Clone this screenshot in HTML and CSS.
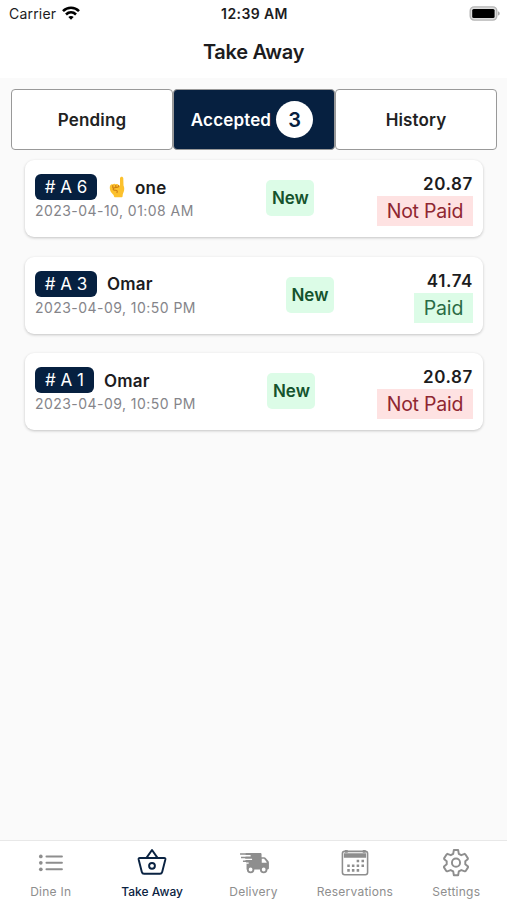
FILE: index.html
```
<!DOCTYPE html>
<html lang="en">
<head>
    <meta charset="UTF-8">
    <meta name="viewport" content="width=device-width, initial-scale=1.0">
    <title>Take Away</title>
    <link rel="stylesheet" href="styles.css">
</head>
<body>
    <header class="header">
        <div class="status-bar">
            <div class="carrier">
                <span>Carrier</span>
                <svg class="wifi" width="18" height="14" viewBox="0 0 18 14" fill="none" stroke="#000" stroke-width="2.6">
                    <path d="M1 5.1C5.500.6 12.500.6 17 5.100"/>
                    <path d="M4 8.500c2.900-2.800 7.100-2.800 10 0"/>
                    <path d="M9 13.800l-2.700-2.800c1.500-1.400 3.900-1.400 5.400 0z" fill="#000" stroke="none"/>
                </svg>
            </div>
            <span class="time">12:39 AM</span>
            <svg class="battery" width="31" height="15" viewBox="0 0 31 15">
                <rect x="1.200" y=".9" width="26.600" height="13.200" rx="4" fill="#ddd" stroke="#b5b5b5" stroke-width="1.400"/>
                <rect x="3.200" y="3" width="22.400" height="9" rx="1.500" fill="#000"/>
                <path d="M29 5.200c2.300.8 2.300 3.600 0 4.400z" fill="#aaa"/>
            </svg>
        </div>
        <h1>Take Away</h1>
    </header>

    <main>
        <div class="tabs">
            <button class="tab">Pending</button>
            <button class="tab active">Accepted <span class="count">3</span></button>
            <button class="tab">History</button>
        </div>

        <div class="orders">
            <div class="order">
                <div class="info">
                    <div class="customer">
                        <span class="number"># A 6</span>
                        <svg class="hand" width="18" height="22" viewBox="0 0 18 22">
                            <path d="M11 10V2.300c0-2.200 3.300-2.200 3.300 0l.2 7.200c1 2 .9 4.200.3 6.100-.4 1.600-1.200 2.400-1.200 4.600 0 .8-.6 1.100-1.300 1.100H6.300c-.8 0-1.200-.4-1.300-1.100-.2-1.700-3.300-3.200-3.900-6.100C.7 12 .6 10.100 1.500 9.100c.5-.8 1.500-.9 2.200-.5.7-1 2.300-1.100 3-.1.900-.8 2.200-.6 2.700.2z" fill="#fcc12d"/>
                            <path d="M3.800 9.500v2M6.800 9.300v2M9.600 9.600c1 2-2.900 1.700-4.800 2.500-1.300.7-.5 2.300 1 2.200 1.900-.2 3 .3 2.200 2.300" fill="none" stroke="#cc7b12" stroke-width="1.100" stroke-linecap="round"/>
                        </svg>
                        <b>one</b>
                    </div>
                    <div class="date">2023-04-10, 01:08 AM</div>
                </div>
                <span class="state">New</span>
                <div class="payment">
                    <div class="price">20.87</div>
                    <div class="not-paid">Not Paid</div>
                </div>
            </div>

            <div class="order">
                <div class="info">
                    <div class="customer">
                        <span class="number"># A 3</span>
                        <b>Omar</b>
                    </div>
                    <div class="date">2023-04-09, 10:50 PM</div>
                </div>
                <span class="state">New</span>
                <div class="payment">
                    <div class="price">41.74</div>
                    <div class="paid">Paid</div>
                </div>
            </div>

            <div class="order">
                <div class="info">
                    <div class="customer">
                        <span class="number last"># A 1</span>
                        <b>Omar</b>
                    </div>
                    <div class="date">2023-04-09, 10:50 PM</div>
                </div>
                <span class="state">New</span>
                <div class="payment">
                    <div class="price">20.87</div>
                    <div class="not-paid">Not Paid</div>
                </div>
            </div>
        </div>
    </main>

    <nav class="bottom-nav">
        <a class="nav-item">
            <svg width="32" height="32" viewBox="0 0 32 32" fill="none" stroke="#8e8e8e" stroke-width="2" stroke-linecap="round">
                <path d="M11.300 8.700h16M11.300 15.300h16M11.300 22h16"/>
                <g fill="#8e8e8e" stroke="none">
                    <circle cx="5.500" cy="8.700" r="1.900"/>
                    <circle cx="5.500" cy="15.300" r="1.900"/>
                    <circle cx="5.500" cy="22" r="1.900"/>
                </g>
            </svg>
            <span>Dine In</span>
        </a>
        <a class="nav-item active">
            <svg width="32" height="32" viewBox="0 0 32 32" fill="none" stroke="#0a2342" stroke-width="2" stroke-linejoin="round" stroke-linecap="round">
                <path d="M3.400 10.400h25.200c.9 0 1.400.6 1.200 1.500l-3.300 12.800c-.3 1.200-1.100 1.900-2.300 1.900H7.800c-1.200 0-2-.7-2.300-1.900L2.200 11.900c-.2-.9.300-1.500 1.200-1.500z"/>
                <path d="M10.300 10.200L16 2l5.700 8.200"/>
                <circle cx="16" cy="18.400" r="3"/>
            </svg>
            <span>Take Away</span>
        </a>
        <a class="nav-item">
            <svg width="32" height="32" viewBox="0 0 32 32" fill="#8e8e8e">
                <path d="M7.500 5.200h15c.8 0 1.300.5 1.300 1.300V9.500h2.700c.7 0 1.200.2 1.600.7l2.700 3.300c.4.500.6 1 .6 1.700v5.500c0 1-.4 1.500-1.400 1.500H8.300v-5.500l-1.500-5z"/>
                <path d="M1.600 6.100h6.600M2.600 9.900h9.400M4.600 13.700h8.900" fill="none" stroke="#8e8e8e" stroke-width="1.500"/>
                <path d="M6.500 8h6M6.500 11.800h7.500M6.500 15.600h4" fill="none" stroke="#fff" stroke-width="1.400"/>
                <path d="M24 11.200h2.400l2.600 3.300v.8h-5z" fill="#fff"/>
                <circle cx="12.500" cy="22.200" r="2.900" fill="#fff" stroke="#8e8e8e" stroke-width="1.900"/>
                <circle cx="26" cy="22.200" r="2.900" fill="#fff" stroke="#8e8e8e" stroke-width="1.900"/>
            </svg>
            <span>Delivery</span>
        </a>
        <a class="nav-item">
            <svg width="32" height="32" viewBox="0 0 32 32" fill="#8e8e8e">
                <rect x="3" y="3.500" width="26" height="24.200" rx="2.300" fill="none" stroke="#8e8e8e" stroke-width="1.600"/>
                <path d="M4.500 5.400h23V10h-23zM5.500 2h3v3h-3zM24 2h3v3h-3z"/>
                <path d="M17.700 12h2.600v2.600h-2.600zM22.700 12h2.600v2.600h-2.600zM8 17h2.600v2.600H8zM12.800 17h2.600v2.600h-2.600zM17.700 17h2.600v2.600h-2.600zM22.700 17h2.600v2.600h-2.600zM8 21.800h2.600v2.600H8zM12.800 21.800h2.600v2.600h-2.600zM17.700 21.800h2.600v2.600h-2.600z"/>
            </svg>
            <span>Reservations</span>
        </a>
        <a class="nav-item">
            <svg width="32" height="32" viewBox="0 .6 32 32" fill="none" stroke="#8e8e8e" stroke-width="2" stroke-linejoin="round">
                <path d="M13.800 2.700h4.400l.7 3.900 2.500 1.400 3.600-1.400 1.100 1.200 2.200 3.500-.2.900-2.500 2v3.200l2.800 2.300v.9l-2.400 3.800-.9.300-3.600-1.300-2.600 1.400-.7 3.900h-4.400l-.7-3.900-2.600-1.400-3.600 1.300-.9-.3-2.400-3.800v-.9l2.800-2.300v-3.200l-2.500-2-.2-.9 2.200-3.500L7 6.600 10.600 8l2.500-1.400z"/>
                <circle cx="16" cy="15.700" r="4.200"/>
            </svg>
            <span>Settings</span>
        </a>
    </nav>
</body>
</html>
```
FILE: styles.css
```
* {
    box-sizing: border-box;
}
body {
    margin: 0;
    height: 900px;
    display: flex;
    flex-direction: column;
    font-family: Inter, "Liberation Sans", sans-serif;
    background-color: #fafafa;
    color: #1c1c1e;
}
.header {
    height: 78px;
    background-color: #fff;
}
.status-bar {
    display: grid;
    grid-template-columns: 1fr auto 1fr;
    align-items: center;
    height: 27px;
    padding: 0 7px 0 9px;
    font-size: 14px;
}
.carrier {
    display: flex;
    align-items: center;
    gap: 6px;
    letter-spacing: 0.2px;
}
.wifi {
    margin-top: -2px;
}
.time {
    font-weight: 600;
    letter-spacing: 0.4px;
}
.battery {
    justify-self: end;
}
h1 {
    margin: 12px 0 0;
    text-align: center;
    font-size: 20px;
    line-height: 26px;
    font-weight: 600;
    letter-spacing: -0.3px;
}
main {
    flex: 1;
    padding: 11px 10px 0 11px;
}
.tabs {
    display: flex;
    height: 61px;
}
.tab {
    flex: 1;
    display: flex;
    align-items: center;
    justify-content: center;
    gap: 5px;
    padding: 0;
    border: 1px solid #999;
    border-radius: 4px;
    background-color: #fff;
    color: #222;
    font-family: inherit;
    font-size: 17px;
    font-weight: 600;
    letter-spacing: 0.15px;
}
.tab.active {
    background-color: #062040;
    color: #fff;
}
.count {
    width: 37px;
    height: 37px;
    margin-right: 4px;
    border-radius: 50%;
    background-color: #fff;
    color: #062040;
    font-size: 20px;
    line-height: 38px;
}
.orders {
    display: flex;
    flex-direction: column;
    gap: 19.5px;
    padding: 10px 14px 0;
}
.order {
    display: flex;
    justify-content: space-between;
    height: 77px;
    padding: 14px 10px 0;
    border-radius: 9px;
    background-color: #fff;
    box-shadow: 0 1px 3px rgba(0, 0, 0, 0.22);
}
.customer {
    display: flex;
    align-items: center;
    height: 26px;
    font-size: 17px;
}
.customer b {
    margin-left: 10px;
    padding-top: 1px;
    font-weight: 600;
    letter-spacing: 0.2px;
}
.number {
    width: 62px;
    height: 26px;
    border-radius: 6px;
    background-color: #062040;
    color: #fff;
    text-align: center;
    line-height: 27px;
}
.number.last {
    width: 59px;
}
.hand {
    margin-left: 12px;
}
.hand + b {
    margin-left: 8px;
}
.date {
    margin-top: 2px;
    color: #85858a;
    font-size: 14px;
    line-height: 18px;
    letter-spacing: 0.45px;
}
.state {
    width: 48px;
    height: 36px;
    margin: 6px 0 0 10px;
    border-radius: 5px;
    background-color: #dcfce7;
    color: #14532d;
    text-align: center;
    font-size: 17px;
    font-weight: 600;
    line-height: 37px;
}
.payment {
    display: flex;
    flex-direction: column;
    align-items: flex-end;
}
.price {
    height: 22px;
    font-size: 17px;
    font-weight: 600;
    line-height: 20px;
    letter-spacing: 0.6px;
}
.paid,
.not-paid {
    width: 59px;
    height: 30px;
    background-color: #dcfce7;
    color: #2a6b45;
    text-align: center;
    font-size: 19.5px;
    line-height: 31px;
    letter-spacing: -0.2px;
}
.not-paid {
    width: 96px;
    background-color: #fee2e2;
    color: #8f2731;
}
.bottom-nav {
    display: flex;
    height: 60px;
    border-top: 1px solid #e8e8e8;
    background-color: #fff;
}
.nav-item {
    flex: 1;
    display: flex;
    flex-direction: column;
    align-items: center;
    padding-top: 7px;
    color: #8e8e8e;
    font-size: 12px;
    line-height: 16px;
    letter-spacing: 0.25px;
}
.nav-item span {
    margin-top: 5px;
}
.nav-item.active {
    color: #0a2342;
    font-weight: 500;
    letter-spacing: 0;
}
```
